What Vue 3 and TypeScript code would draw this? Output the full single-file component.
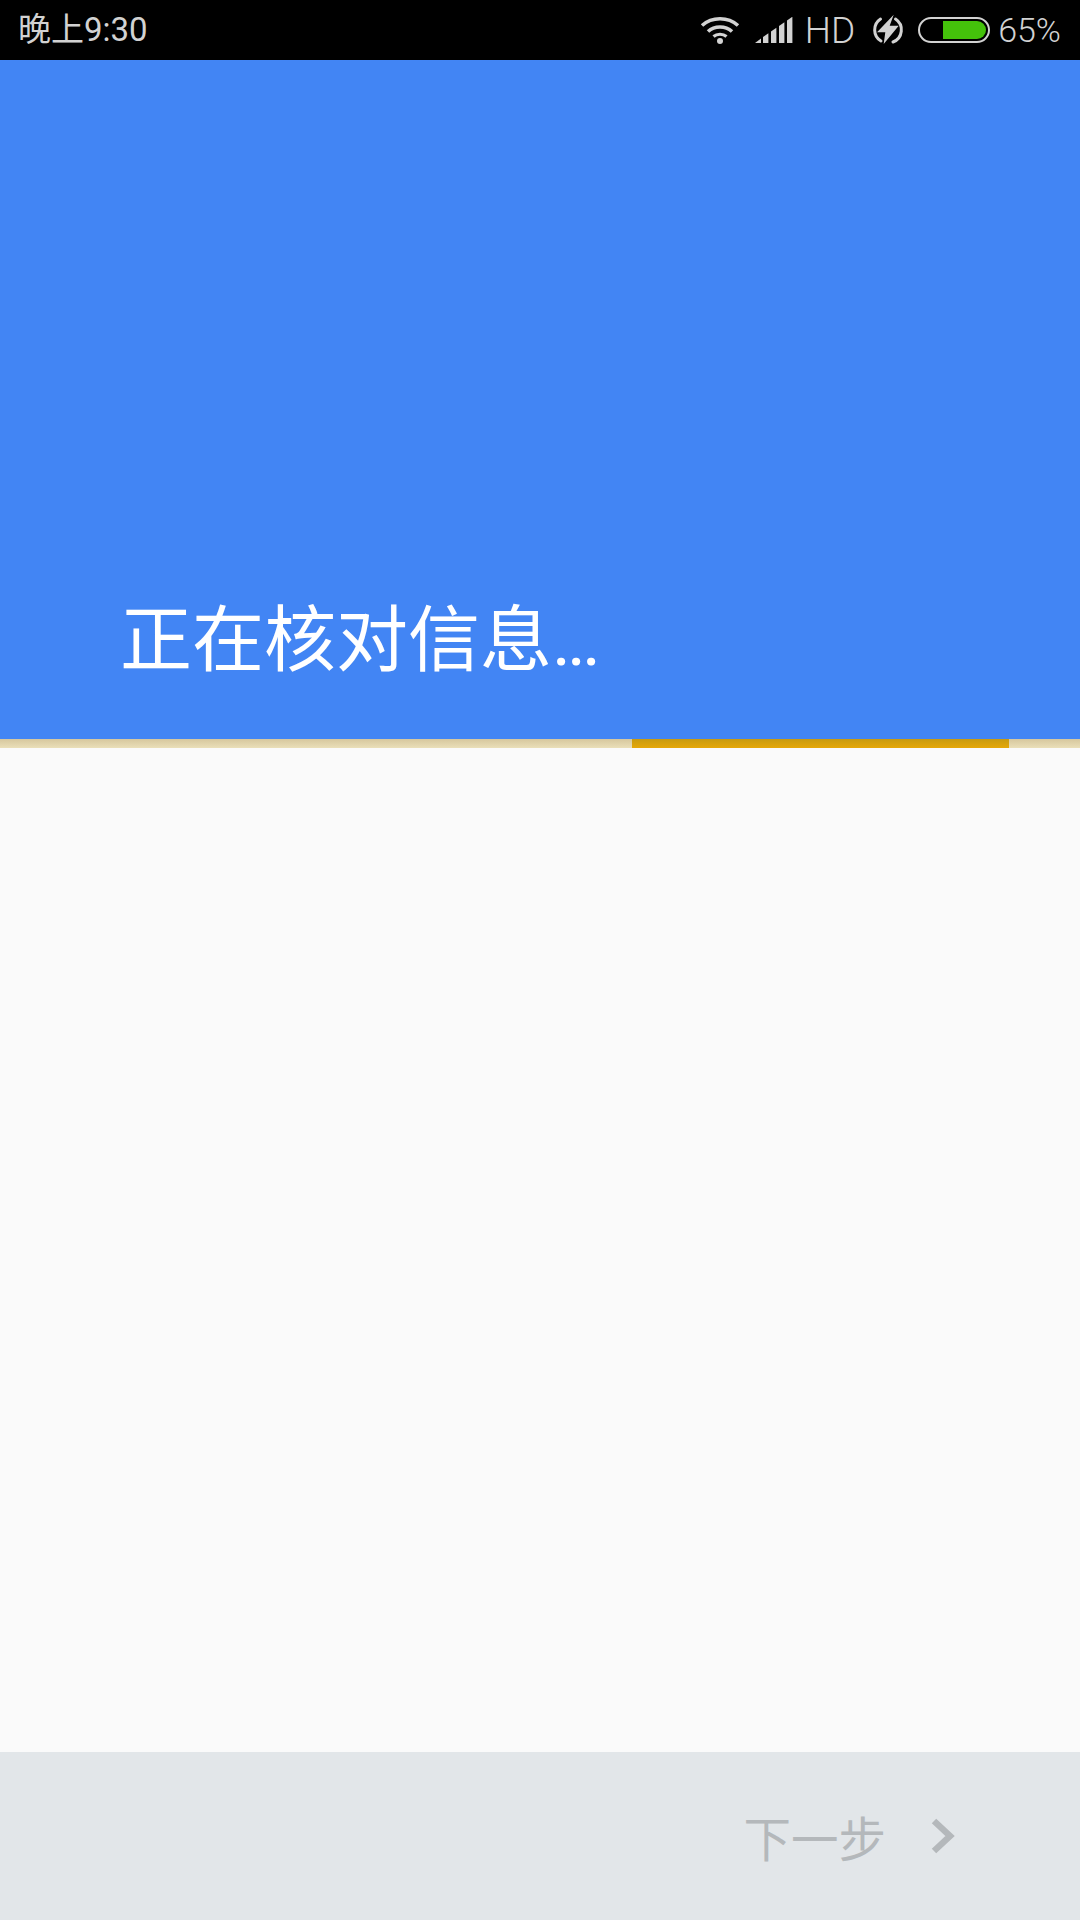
<script setup lang="ts">
const titleMain: string = '正在核对信息'
const titleDots: string = '...'
const barXs: number[] = [8, 16, 24, 32]
const barPoints = (x: number): string => {
  const top = (v: number): number => 25.5 - (v * 25.5) / 37
  return `${x},26 ${x},${top(x)} ${x + 5.4},${top(x + 5.4)} ${x + 5.4},26`
}
</script>

<template>
  <div class="page">
    <div class="status">
      <span class="time">晚上9:30</span>
      <div class="status-right">
        <svg class="wifi" width="40" height="28" viewBox="0 0 40 28">
          <path d="M2 9.5C12 0.5 28 0.5 38 9.5" fill="none" stroke="#d2d2d2" stroke-width="3.6" />
          <path d="M8 15.5C14.5 9.5 25.5 9.5 32 15.5" fill="none" stroke="#d2d2d2" stroke-width="3.6" />
          <path d="M13.5 20.5C17 17.5 23 17.5 26.5 20.5" fill="none" stroke="#d2d2d2" stroke-width="3.2" />
          <circle cx="20" cy="25" r="3" fill="#d2d2d2" />
        </svg>
        <svg class="signal" width="38" height="26" viewBox="0 0 38 26">
          <path d="M0 26L6 21.5V26Z" fill="#d2d2d2" />
          <polygon v-for="x in barXs" :key="x" :points="barPoints(x)" fill="#d2d2d2" />
        </svg>
        <span class="hd">HD</span>
        <svg class="bolt" width="32" height="32" viewBox="0 0 32 32">
          <path d="M8.5 5A13 13 0 0 0 9 27M23.5 5A13 13 0 0 1 21 28" fill="none" stroke="#d2d2d2" stroke-width="3" stroke-linecap="round" />
          <path d="M21.7 0.7L5 18.3H13.3L11.7 30L26.7 11.7H17.7Z" fill="#d2d2d2" />
        </svg>
        <div class="battery"><div class="battery-fill"></div></div>
        <span class="pct">65%</span>
      </div>
    </div>
    <header class="hero">
      <h1 class="title">{{ titleMain }}<span class="dots">{{ titleDots }}</span></h1>
    </header>
    <div class="track"><div class="progress"></div></div>
    <main class="content"></main>
    <footer class="footer">
      <span class="next">下一步</span>
      <svg class="chevron" width="24" height="36" viewBox="0 0 24 36">
        <path d="M3 3L19 18L3 33" fill="none" stroke="#b4b8bb" stroke-width="6.5" />
      </svg>
    </footer>
  </div>
</template>

<style scoped>
.page {
  width: 1080px;
  height: 1920px;
  display: flex;
  flex-direction: column;
  background: #fafafa;
  font-family: "Roboto", "Noto Sans CJK SC", sans-serif;
  overflow: hidden;
}
.status {
  height: 60px;
  flex: none;
  background: #000;
  color: #d2d2d2;
  display: flex;
  align-items: center;
  justify-content: space-between;
  padding: 0 19px 0 18px;
  font-size: 33px;
  font-weight: 400;
}
.time {
  line-height: 60px;
}
.status-right {
  display: flex;
  align-items: center;
}
.wifi { margin-right: 15px; }
.signal { margin-right: 12px; }
.hd { margin-right: 17px; font-size: 37px; font-weight: 300; }
.bolt { margin-right: 14px; }
.battery {
  width: 72px;
  height: 26px;
  box-sizing: border-box;
  border: 2px solid #d2d2d2;
  border-radius: 13px;
  padding: 2px;
  display: flex;
  justify-content: flex-end;
  margin-right: 8px;
}
.battery-fill {
  width: 43px;
  background: #44c10b;
  border-radius: 0 10px 10px 0;
}
.pct { font-size: 34px; font-weight: 300; }
.hero {
  height: 679px;
  flex: none;
  background: #4285f4;
  display: flex;
  align-items: flex-end;
  padding: 0 0 48px 120px;
  box-sizing: border-box;
}
.title {
  margin: 0;
  color: #fff;
  font-size: 72px;
  font-weight: 400;
  line-height: 100px;
}
.dots {
  letter-spacing: -4px;
}
.track {
  height: 9px;
  flex: none;
  background: linear-gradient(#d6c79e, #eadfb9);
}
.progress {
  width: 377px;
  height: 9px;
  margin-left: 632px;
  background: linear-gradient(#c79a10, #e6a808);
}
.content {
  flex: 1;
}
.footer {
  height: 168px;
  flex: none;
  background: #e2e6e9;
  display: flex;
  align-items: center;
  justify-content: flex-end;
  padding-right: 125px;
}
.next {
  font-size: 47.5px;
  font-weight: 400;
  color: #b4b8bb;
  margin-right: 45px;
}
</style>
